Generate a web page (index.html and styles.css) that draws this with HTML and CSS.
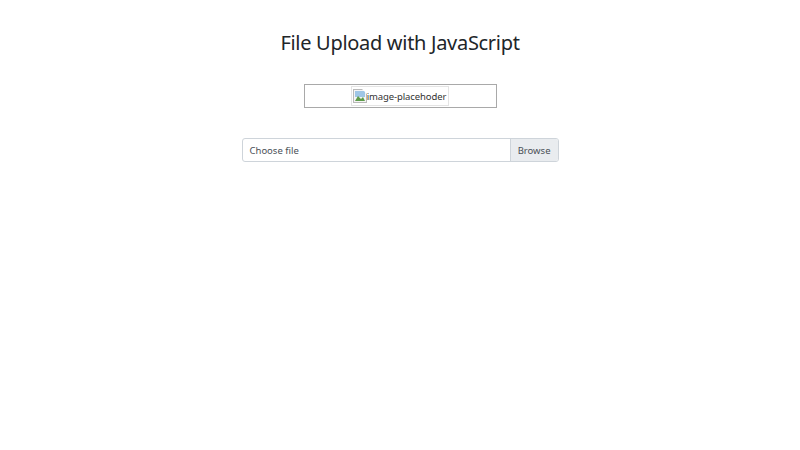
FILE: index.html
```html
<!DOCTYPE html>
<html lang="en">
<head>
    <meta charset="UTF-8">
    <meta name="viewport" content="width=device-width, initial-scale=1.0">
    <title>File Upload with JavaScript</title>
    <link rel="stylesheet" href="styles.css">
</head>
<body>
    <div class="container">
        <h1 class="title">File Upload with JavaScript</h1>
        <div class="preview">
            <span class="broken-img">
                <svg class="broken-icon" width="14" height="14" viewBox="0 0 14 14">
                    <rect x="0.5" y="0.5" width="13" height="13" fill="#f4f4f4" stroke="#b9b9b9"/>
                    <rect x="2" y="2" width="10" height="6" fill="#9fc6e6"/>
                    <path d="M2 12 L5 7 L8 10 L10 8 L12 12 Z" fill="#5e9b4a"/>
                    <path d="M9 0 L14 5 L14 0 Z" fill="#ffffff"/>
                </svg>image-placehoder
            </span>
        </div>
        <label class="file-field">
            <span class="file-label">Choose file</span>
            <span class="file-btn">Browse</span>
        </label>
    </div>
</body>
</html>
```

FILE: styles.css
```css
body {
    margin: 0;
    font-family: "Noto Sans", "Open Sans", sans-serif;
    color: #212529;
    background: #ffffff;
}
.container {
    display: flex;
    flex-direction: column;
    align-items: center;
    padding-top: 28px;
}
.title {
    margin: 0;
    font-size: 20px;
    font-weight: 400;
    letter-spacing: -0.3px;
    line-height: 30px;
}
.preview {
    margin-top: 26px;
    width: 191px;
    height: 22px;
    border: 1px solid #a9a9a9;
    display: flex;
    align-items: center;
    justify-content: center;
}
.broken-img {
    display: flex;
    align-items: center;
    height: 18px;
    padding: 0 2px 0 1px;
    border: 1px solid #e4e4e4;
    font-size: 9.5px;
    letter-spacing: -0.1px;
    color: #333333;
}
.file-field {
    margin-top: 30px;
    width: 315px;
    height: 22px;
    border: 1px solid #ced4da;
    border-radius: 3px;
    display: flex;
    overflow: hidden;
    font-size: 9.5px;
    color: #495057;
}
.file-label {
    flex: 1;
    display: flex;
    align-items: center;
    padding-left: 7px;
}
.file-btn {
    display: flex;
    align-items: center;
    padding: 0 7px;
    background: #e9ecef;
    border-left: 1px solid #ced4da;
}
```
